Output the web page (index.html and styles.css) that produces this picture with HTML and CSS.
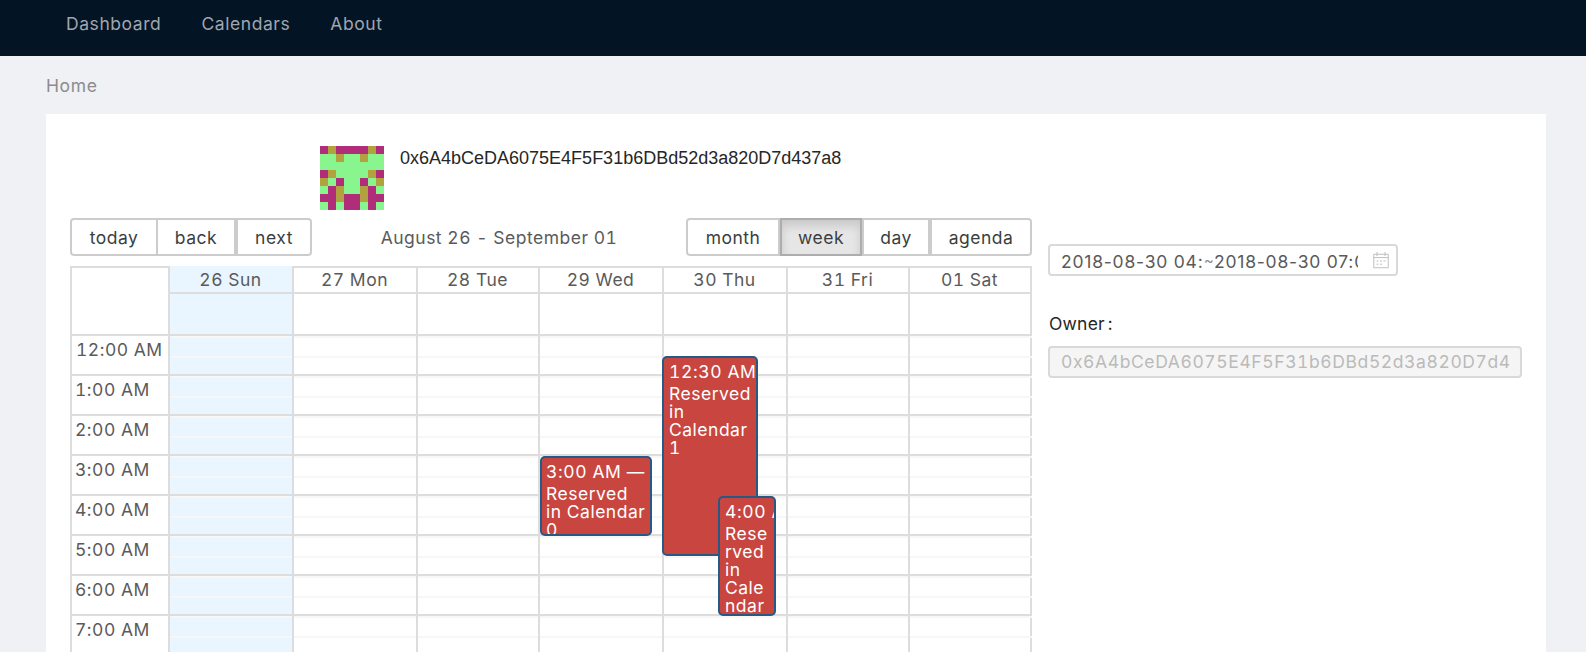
FILE: index.html
```html
<!DOCTYPE html>
<html lang="en">
<head>
<meta charset="utf-8">
<title>Calendar</title>
<link rel="stylesheet" href="styles.css">
</head>
<body>
<header class="topbar">
  <nav class="nav">
    <a class="nav-item">Dashboard</a>
    <a class="nav-item">Calendars</a>
    <a class="nav-item">About</a>
  </nav>
</header>
<div class="breadcrumb"><span>Home</span></div>
<main class="panel">
  <section class="left">
    <div class="identity">
      <svg class="identicon" viewBox="0 0 8 8" shape-rendering="crispEdges">
        <rect width="8" height="8" fill="#88f58f"/>
        <path fill="#b02d79" d="M0 0h8v1H0zM0 3h1v1H0zM7 3h1v1H7zM2 4h1v1H2zM5 4h1v1H5zM1 5h1v3H1zM6 5h1v3H6zM0 6h1v1H0zM7 6h1v1H7zM3 6h2v2H3z"/>
        <path fill="#b3a13f" d="M1 0h1v1H1zM6 0h1v1H6zM2 1h1v1H2zM5 1h1v1H5zM1 3h1v1H1zM6 3h1v1H6zM0 4h1v1H0zM7 4h1v1H7zM2 5h1v2H2zM5 5h1v2H5z"/>
      </svg>
      <span class="address">0x6A4bCeDA6075E4F5F31b6DBd52d3a820D7d437a8</span>
    </div>
    <div class="toolbar">
      <div class="btn-group">
        <button class="btn btn-today">today</button><button class="btn btn-back">back</button><button class="btn btn-next">next</button>
      </div>
      <div class="range"><span>August 26 - September 01</span></div>
      <div class="btn-group">
        <button class="btn btn-month">month</button><button class="btn btn-week active">week</button><button class="btn btn-day">day</button><button class="btn btn-agenda">agenda</button>
      </div>
    </div>
    <div class="calendar">
      <div class="cal-head">
        <div class="head-gutter"></div>
        <div class="head-day today"><div class="head-label">26 Sun</div></div>
        <div class="head-day"><div class="head-label">27 Mon</div></div>
        <div class="head-day"><div class="head-label">28 Tue</div></div>
        <div class="head-day"><div class="head-label">29 Wed</div></div>
        <div class="head-day"><div class="head-label">30 Thu</div></div>
        <div class="head-day"><div class="head-label">31 Fri</div></div>
        <div class="head-day last"><div class="head-label">01 Sat</div></div>
      </div>
      <div class="cal-body">
        <div class="gutter">
          <div class="hour"><span class="first">12:00 AM</span></div>
          <div class="hour"><span>1:00 AM</span></div>
          <div class="hour"><span>2:00 AM</span></div>
          <div class="hour"><span>3:00 AM</span></div>
          <div class="hour"><span>4:00 AM</span></div>
          <div class="hour"><span>5:00 AM</span></div>
          <div class="hour"><span>6:00 AM</span></div>
          <div class="hour"><span>7:00 AM</span></div>
        </div>
        <div class="day today"></div>
        <div class="day"></div>
        <div class="day"></div>
        <div class="day">
          <div class="event ev-a"><div class="ev-time">3:00 AM —</div><div class="ev-text">Reserved<br>in Calendar<br>0</div></div>
        </div>
        <div class="day">
          <div class="event ev-b"><div class="ev-time">12:30 AM</div><div class="ev-text">Reserved<br>in<br>Calendar<br>1</div></div>
          <div class="event ev-c"><div class="ev-time">4:00 AM</div><div class="ev-text">Rese<br>rved<br>in<br>Cale<br>ndar</div></div>
        </div>
        <div class="day"></div>
        <div class="day last"></div>
      </div>
    </div>
  </section>
  <aside class="right">
    <div class="picker">
      <span class="date"><span>2018-08-30 04:00</span></span><span class="tilde">~</span><span class="date date-end"><span>2018-08-30 07:00</span></span>
      <svg class="cal-icon" viewBox="0 0 16 17" fill="none" stroke="#bfbfbf">
        <path d="M.75 2.25h14.500v13.500H.75zM.75 5.600h14.500M4 0v4M12 0v4"/>
        <path stroke-dasharray="2 1.500" d="M3.500 9h9M3.500 12.200h6"/>
      </svg>
    </div>
    <div class="label"><span>Owner</span><span class="colon">:</span></div>
    <div class="field"><span>0x6A4bCeDA6075E4F5F31b6DBd52d3a820D7d4</span></div>
  </aside>
</main>
<script src="app.js"></script>
</body>
</html>
```
FILE: app.js
```js
// Fills each day column with one two-slot group per hour row.
document.querySelectorAll('.day').forEach(function (day) {
  var rows = document.createElement('div');
  rows.className = 'rows';
  for (var i = 0; i < 8; i++) {
    rows.insertAdjacentHTML('beforeend',
      '<div class="group"><div class="slot"></div><div class="slot"></div></div>');
  }
  day.prepend(rows);
});
```
FILE: styles.css
```css
* { box-sizing: border-box; }
body {
  margin: 0;
  height: 652px;
  overflow: hidden;
  background: #f0f1f5;
  color: #5a5a5a;
  font: 17.5px/26px Inter, "Liberation Sans", sans-serif;
  font-variant-numeric: tabular-nums;
  letter-spacing: 0.5px;
  white-space: nowrap;
}
.topbar { height: 56px; background: #031425; }
.nav { display: flex; gap: 40px; padding: 11px 0 0 66px; color: #a0a6ad; letter-spacing: 0.57px; }
.breadcrumb { height: 58px; padding: 17px 0 0 46px; color: #8c8c8e; letter-spacing: 0.6px; }
.panel {
  display: flex;
  gap: 16px;
  height: 538px;
  margin: 0 40px 0 46px;
  padding: 32px 24px 0;
  background: #fff;
  overflow: hidden;
}
.left { width: 962px; flex: none; }
.identity { display: flex; gap: 16px; height: 72px; padding-left: 250px; }
.identicon { width: 64px; height: 64px; }
.address {
  color: #262626;
  font-family: "Liberation Sans", Arial, sans-serif;
  font-size: 18px;
  line-height: 24px;
  letter-spacing: 0;
}
.toolbar { display: flex; height: 38px; margin-bottom: 10px; }
.btn-group { display: flex; }
.range { flex: 1; text-align: center; line-height: 40px; }
.btn {
  height: 38px;
  padding: 2px 0 0;
  border: 2px solid #ccc;
  background: #fff;
  color: #3b3e40;
  font: inherit;
  letter-spacing: inherit;
  line-height: 32px;
}
.btn-today { width: 88px; border-radius: 4px 0 0 4px; }
.btn-back { width: 78px; border-left: 0; }
.btn-next { width: 76px; border-radius: 0 4px 4px 0; }
.btn-month { width: 94px; border-radius: 4px 0 0 4px; }
.btn-week { width: 82px; }
.btn-day { width: 68px; border-left: 2px solid #ccc; }
.btn-agenda { width: 102px; border-radius: 0 4px 4px 0; }
.btn.active {
  background: #e6e6e6;
  border-color: #adadad;
  box-shadow: inset 0 6px 10px rgba(0, 0, 0, 0.125);
}
.cal-head, .cal-body {
  display: grid;
  grid-template-columns: 98px 124px 124px 122px 124px 124px 122px 124px;
}
.cal-head { height: 70px; border-bottom: 2px solid #ddd; }
.head-gutter { border: solid #ddd; border-width: 2px 0 0 2px; }
.head-day { border-left: 2px solid #ddd; }
.head-label {
  height: 28px;
  padding-right: 1px;
  border: solid #ddd;
  border-width: 2px 0;
  text-align: center;
  line-height: 23px;
}
.head-day.today { background: #eaf6ff; }
.today .head-label { border-top-color: #eaf6ff; }
.head-day.last { border-right: 2px solid #ddd; }
.gutter { border-left: 2px solid #ddd; }
.hour { height: 40px; padding: 1px 0 0 3px; border-bottom: 2px solid #ddd; }
.first { margin-left: 1px; }
.day { position: relative; border-left: 2px solid #ddd; }
.day.today { background: #eaf6ff; }
.group { display: grid; grid-template-rows: 20px 18px; border-bottom: 2px solid #ddd; }
.slot { border-top: 2px solid #f7f7f7; }
.last .slot { box-shadow: inset -2px 0 #ddd; }
.event {
  position: absolute;
  border: 2px solid #265985;
  border-radius: 5px;
  background: #c8463f;
  color: #fff;
  overflow: hidden;
  padding: 2px 0 0 4px;
}
.ev-time { height: 25px; line-height: 23px; letter-spacing: 0.6px; }
.ev-text { line-height: 18px; }
.ev-a { left: 0; top: 120px; width: 112px; height: 80px; }
.ev-b { left: -2px; top: 20px; width: 96px; height: 200px; padding-left: 5px; }
.ev-c { left: 54px; top: 160px; width: 58px; height: 120px; padding-left: 5px; }
.right { width: 474px; padding-top: 98px; }
.picker {
  display: flex;
  align-items: center;
  width: 350px;
  height: 32px;
  padding-left: 11px;
  border: 2px solid #d9d9d9;
  border-radius: 4px;
}
.date {
  width: 141px;
  overflow: hidden;
  padding-top: 3px;
  font-variant-numeric: normal;
  letter-spacing: 0.78px;
}
.tilde { width: 12px; padding: 2px 0 0 2px; letter-spacing: 0; font-size: 15px; color: #8c8c8c; }
.date-end { width: 144px; }
.cal-icon { width: 16px; height: 17px; margin-left: 15px; }
.label { padding: 35px 0 9px 1px; color: #262626; letter-spacing: 0.2px; }
.colon { margin-left: 3px; }
.field {
  height: 32px;
  padding-left: 11px;
  border: 2px solid #d9d9d9;
  border-radius: 4px;
  background: #f5f5f5;
  color: #bababa;
  line-height: 28px;
  letter-spacing: 0.6px;
}
```
